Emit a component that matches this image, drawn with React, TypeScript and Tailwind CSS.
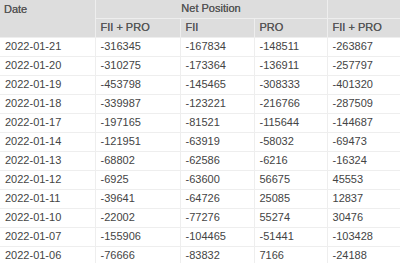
const rows: [string, string, string, string, string][] = [
  ["2022-01-21", "-316345", "-167834", "-148511", "-263867"],
  ["2022-01-20", "-310275", "-173364", "-136911", "-257797"],
  ["2022-01-19", "-453798", "-145465", "-308333", "-401320"],
  ["2022-01-18", "-339987", "-123221", "-216766", "-287509"],
  ["2022-01-17", "-197165", "-81521", "-115644", "-144687"],
  ["2022-01-14", "-121951", "-63919", "-58032", "-69473"],
  ["2022-01-13", "-68802", "-62586", "-6216", "-16324"],
  ["2022-01-12", "-6925", "-63600", "56675", "45553"],
  ["2022-01-11", "-39641", "-64726", "25085", "12837"],
  ["2022-01-10", "-22002", "-77276", "55274", "30476"],
  ["2022-01-07", "-155906", "-104465", "-51441", "-103428"],
  ["2022-01-06", "-76666", "-83832", "7166", "-24188"],
];

export default function App() {
  return (
    <div className="w-[400px] h-[263px] overflow-hidden bg-white font-['Liberation_Sans',Arial,sans-serif] text-[11px]">
      <table className="w-[400px] table-fixed border-collapse">
        <colgroup>
          <col className="w-[95px]" />
          <col className="w-[85px]" />
          <col className="w-[74px]" />
          <col className="w-[73px]" />
          <col className="w-[73px]" />
        </colgroup>
        <thead className="bg-[#dddddd] text-[#555]">
          <tr>
            <th rowSpan={2} className="border border-[#eeeeee] border-t-0 border-l-0 px-[4px] py-0 text-left align-top pt-[3px] leading-[13px] font-normal [text-shadow:0_0_0.4px_#555]">
              Date
            </th>
            <th colSpan={3} className="h-[18px] border border-[#eeeeee] border-t-0 px-[4px] py-0 text-center leading-[13px] font-normal [text-shadow:0_0_0.4px_#555]">
              Net Position
            </th>
            <th className="h-[18px] border border-[#eeeeee] border-t-0 border-r-0 py-0"></th>
          </tr>
          <tr>
            <th className="h-[19px] border border-[#eeeeee] px-[5px] py-0 text-left leading-[13px] font-normal [text-shadow:0_0_0.4px_#555]">FII + PRO</th>
            <th className="h-[19px] border border-[#eeeeee] px-[5px] py-0 text-left leading-[13px] font-normal [text-shadow:0_0_0.4px_#555]">FII</th>
            <th className="h-[19px] border border-[#eeeeee] px-[5px] py-0 text-left leading-[13px] font-normal [text-shadow:0_0_0.4px_#555]">PRO</th>
            <th className="h-[19px] border border-[#eeeeee] border-r-0 px-[5px] py-0 text-left leading-[13px] font-normal [text-shadow:0_0_0.4px_#555]">FII + PRO</th>
          </tr>
        </thead>
        <tbody className="text-[#444]">
          {rows.map((r) => (
            <tr key={r[0]}>
              {r.map((c, i) => (
                <td
                  key={i}
                  className={`h-[19px] border border-[#eeeeee] px-[5px] py-0 leading-[13px] ${i === 0 ? "border-l-0" : ""} ${i === 4 ? "border-r-0" : ""}`}
                >
                  {c}
                </td>
              ))}
            </tr>
          ))}
        </tbody>
      </table>
    </div>
  );
}
